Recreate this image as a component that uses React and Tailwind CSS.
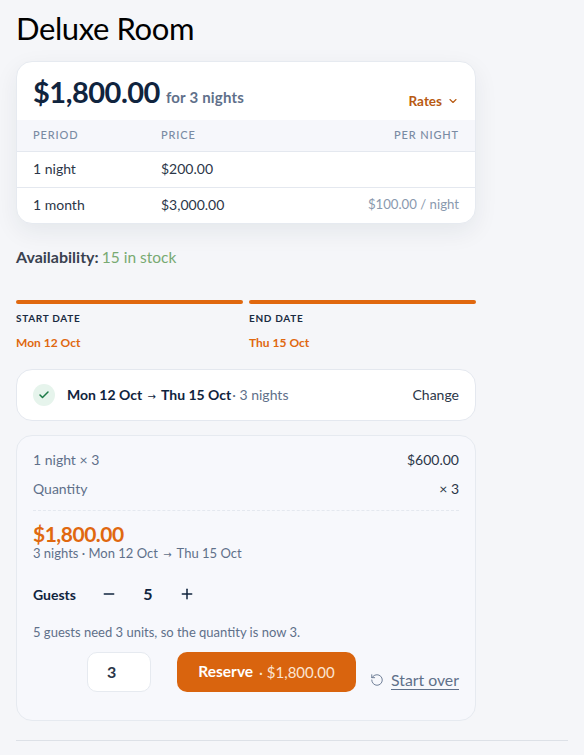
import React from "react";
import { Check, ChevronDown, Minus, Plus, RotateCcw } from "lucide-react";

const Arrow = () => <span className="mx-[2px] font-normal font-['DejaVu_Sans',sans-serif] text-[10px]">→</span>;

export default function App() {
  return (
    <div className="min-h-[755px] bg-[#f5f6f9] px-4 font-['Lato',sans-serif] overflow-hidden h-[755px]">
      <h1 className="pt-[8px] text-[31px] leading-[40px] font-normal tracking-[-0.4px] text-black">Deluxe Room</h1>
      <div className="w-[460px]">
        <div className="mt-[13px] rounded-2xl border border-[#e6eaf0] bg-white shadow-[0_8px_24px_rgba(15,36,62,0.07)] overflow-hidden">
          <div className="flex items-end justify-between h-[58px] px-4 pb-[9px]">
            <div className="flex items-baseline gap-[6px] -mb-[1px] self-start pt-[11px]">
              <span className="text-[29px] leading-[38px] font-bold tracking-[-0.5px] text-[#10243e]">$1,800.00</span>
              <span className="text-[15px] font-bold tracking-[0.2px] text-[#5f708a]">for 3 nights</span>
            </div>
            <div className="flex items-center gap-[5px] text-[13.5px] font-bold text-[#b85a12]">
              Rates <ChevronDown size={12} strokeWidth={2.25} />
            </div>
          </div>
          <div className="grid grid-cols-[128px_1fr_auto] items-center h-[32px] px-4 bg-[#f6f7fb] border-b border-[#e4e8ef] text-[11px] tracking-[0.85px] font-medium text-[#7a8ba3]">
            <span>PERIOD</span><span>PRICE</span><span>PER NIGHT</span>
          </div>
          <div className="grid grid-cols-[128px_1fr_auto] items-center h-[36px] px-4 pb-[2px] border-b border-[#e4e8ef] text-[14px] text-[#2b3648]">
            <span>1 night</span><span>$200.00</span><span></span>
          </div>
          <div className="grid grid-cols-[128px_1fr_auto] items-center h-[35px] px-4 pb-[2px] text-[14px] text-[#2b3648]">
            <span>1 month</span><span>$3,000.00</span><span className="text-[13.2px] text-[#8a99ae]">$100.00 / night</span>
          </div>
        </div>
        <p className="mt-[22px] text-[16px] leading-[22px] text-[#78aa72]"><span className="font-bold text-[#3a4250]">Availability:</span> <span className="-ml-px text-[15.5px]">15 in stock</span></p>
        <div className="mt-[32px] grid grid-cols-2 gap-[6px]">
          <div>
            <div className="h-1 rounded-sm bg-[#e0680f]" />
            <div className="mt-[7px] text-[10px] leading-[14px] font-bold tracking-[0.7px] text-[#1a2b42]">START DATE</div>
            <div className="mt-[10px] text-[12px] leading-[16px] font-bold text-[#e0680f]">Mon 12 Oct</div>
          </div>
          <div>
            <div className="h-1 rounded-sm bg-[#e0680f]" />
            <div className="mt-[7px] text-[10px] leading-[14px] font-bold tracking-[0.7px] text-[#1a2b42]">END DATE</div>
            <div className="mt-[10px] text-[12px] leading-[16px] font-bold text-[#e0680f]">Thu 15 Oct</div>
          </div>
        </div>
        <div className="mt-[18px] flex items-center h-[52px] rounded-2xl border border-[#e4e8ef] bg-white px-4 text-[14px]">
          <span className="flex items-center justify-center w-[22px] h-[22px] rounded-full bg-[#e6f4ec] text-[#1c7a47]"><Check size={12} strokeWidth={3} /></span>
          <span className="ml-3 pb-px font-bold text-[#10243e]">Mon 12 Oct <Arrow /> Thu 15 Oct</span>
          <span className="ml-px pb-px text-[#5f708a]">· 3 nights</span>
          <span className="ml-auto pb-px text-[#2b3648]">Change</span>
        </div>
        <div className="mt-[14px] h-[286px] rounded-2xl border border-[#e6eaf0] bg-[#f7f8fc] px-4 pt-[14px]">
          <div className="flex justify-between text-[14px] leading-[20px]"><span className="text-[#5f708a]">1 night × 3</span><span className="text-[#2b3648]">$600.00</span></div>
          <div className="mt-[9px] flex justify-between text-[14px] leading-[20px]"><span className="text-[#5f708a]">Quantity</span><span className="text-[#2b3648]">× 3</span></div>
          <div className="mt-[11px] border-t border-dashed border-[#e4e8ef]" />
          <div className="mt-[9px] text-[21px] leading-[28px] font-bold tracking-[-0.5px] text-[#e0680f]">$1,800.00</div>
          <div className="-mt-[3px] text-[13px] leading-[16px] text-[#5f708a]">3 nights · Mon 12 Oct <Arrow /> Thu 15 Oct</div>
          <div className="mt-[21px] flex items-center h-[20px] text-[#10243e]">
            <span className="text-[14px] font-bold w-[68px]">Guests</span>
            <Minus size={16} strokeWidth={2.25} />
            <span className="w-[62px] text-center text-[16px] font-bold">5</span>
            <Plus size={16} strokeWidth={2.25} />
          </div>
          <p className="mt-[18px] text-[13px] leading-[20px] text-[#5f708a]">5 guests need 3 units, so the quantity is now 3.</p>
          <div className="mt-[10px] flex items-end">
            <div className="ml-[54px] flex items-center w-[64px] h-[40px] rounded-[10px] border border-[#e6eaf0] bg-white pl-[19px] text-[16px] font-bold text-[#2b3648]">3</div>
            <div className="ml-[26px] flex items-center justify-center w-[179px] h-[40px] rounded-[10px] bg-[#d9640e] text-[15px] text-[#ffffff]">
              <span className="text-[15.5px] font-bold">Reserve</span><span className="ml-[6px] text-[#fbe4d2]">· $1,800.00</span>
            </div>
            <div className="ml-[14px] mb-[2px] flex items-center text-[15.8px] text-[#5f708a]">
              <RotateCcw size={14} strokeWidth={1.5} />
              <span className="ml-[7px] leading-[19px] border-b border-[#5f708a]">Start over</span>
            </div>
          </div>
        </div>
      </div>
      <div className="mt-[19px] border-t border-[#dde1e7]" />
    </div>
  );
}
